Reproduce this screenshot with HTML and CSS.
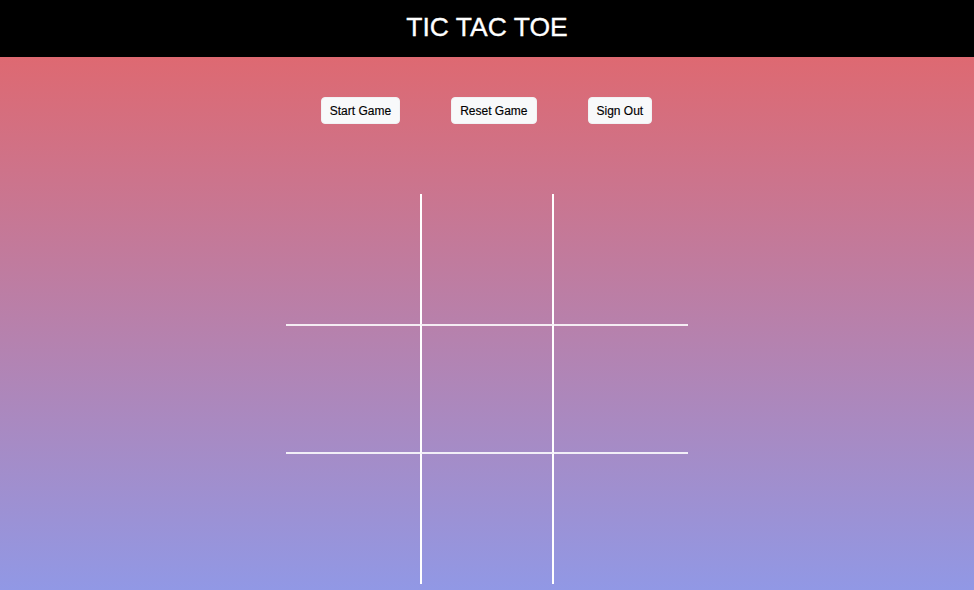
FILE: index.html
```html
<!DOCTYPE html>
<html lang="en">
<head>
<meta charset="utf-8">
<title>Tic Tac Toe</title>
<link rel="stylesheet" href="styles.css">
</head>
<body>
<header class="topbar">
  <h1 class="title">TIC TAC TOE</h1>
</header>
<main class="content">
  <div class="controls">
    <button class="btn" type="button">Start Game</button>
    <button class="btn" type="button">Reset Game</button>
    <button class="btn" type="button">Sign Out</button>
  </div>
  <div class="board">
    <div class="cell"></div>
    <div class="cell mid-col"></div>
    <div class="cell"></div>
    <div class="cell mid-row"></div>
    <div class="cell mid-row mid-col"></div>
    <div class="cell mid-row"></div>
    <div class="cell"></div>
    <div class="cell mid-col"></div>
    <div class="cell"></div>
  </div>
</main>
</body>
</html>
```
FILE: styles.css
```css
html, body {
  margin: 0;
  padding: 0;
}
body {
  min-height: 100vh;
  background: linear-gradient(#e66465, #9198e5);
  font-family: "Liberation Sans", Arial, sans-serif;
  overflow: hidden;
}
.topbar {
  height: 57px;
  background: #000;
  display: flex;
  align-items: center;
  justify-content: center;
}
.title {
  margin: 0;
  color: #fff;
  font-size: 26.5px;
  font-weight: 400;
  line-height: 1;
  padding-bottom: 2px;
  -webkit-text-stroke: 0.3px #fff;
}
.content {
  display: flex;
  flex-direction: column;
  align-items: center;
  padding-top: 40px;
}
.controls {
  display: flex;
  gap: 51px;
  height: 27px;
  margin-left: -1px;
}
.btn {
  height: 27px;
  padding: 0 8px;
  font-family: "Liberation Sans", Arial, sans-serif;
  font-size: 12px;
  color: #000;
  background: #f8f9fa;
  border: 1px solid #f1f2f4;
  border-radius: 4px;
  cursor: pointer;
  -webkit-text-stroke: 0.15px #000;
}
.board {
  margin-top: 70px;
  display: grid;
  grid-template-columns: repeat(3, 134px);
  grid-template-rows: repeat(3, 130px);
}
.cell {
  box-sizing: border-box;
}
.mid-col {
  border-left: 2px solid #fff;
  border-right: 2px solid #fff;
}
.mid-row {
  border-top: 2px solid rgba(255, 255, 255, 0.85);
  border-bottom: 2px solid rgba(255, 255, 255, 0.85);
}
```
